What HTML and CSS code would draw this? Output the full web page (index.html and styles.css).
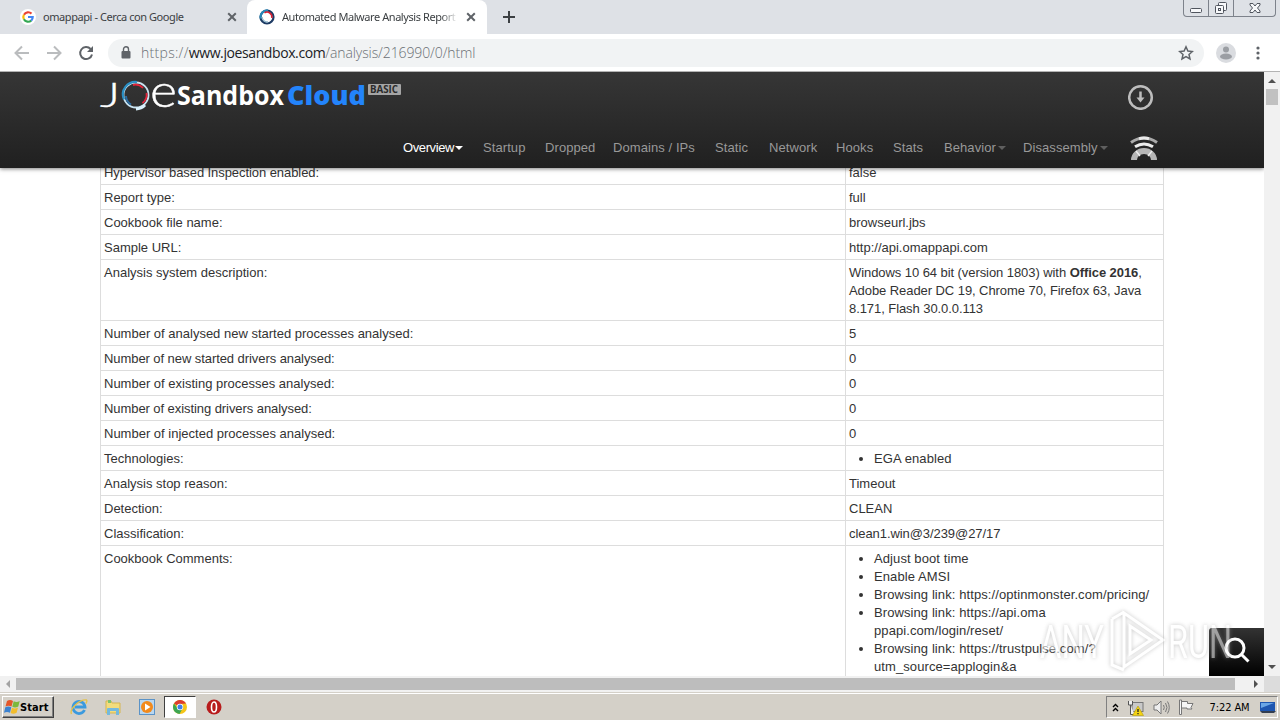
FILE: index.html
```html
<!DOCTYPE html>
<html lang="en">
<head>
    <meta charset="UTF-8">
    <meta name="viewport" content="width=device-width, initial-scale=1.0">
    <title>Automated Malware Analysis Report</title>
    <link rel="stylesheet" href="styles.css">
</head>
<body>
    <div class="tabstrip">
        <div class="tab">
            <svg class="favicon" width="16" height="16" viewBox="0 0 16 16">
                <circle cx="8" cy="8" r="8" fill="#fff"/>
                <g fill="none" stroke-width="2.2">
                    <path d="M4 5.7A4.8 4.8 0 0 1 11.5 4.6" stroke="#ea4335"/>
                    <path d="M3.9 10.3a4.8 4.8 0 0 1 0-4.6" stroke="#fbbc05"/>
                    <path d="M11.3 11.5A4.8 4.8 0 0 1 3.9 10.3" stroke="#34a853"/>
                    <path d="M8 8h4.7a4.8 4.8 0 0 1-1.5 3.6" stroke="#4285f4"/>
                </g>
            </svg>
            <span class="tab-title">omappapi - Cerca con Google</span>
            <svg class="close" width="10" height="10" viewBox="0 0 10 10"><path d="M1.2 1.2l7.6 7.6M8.8 1.2L1.2 8.8"/></svg>
        </div>
        <div class="tab active">
            <svg class="favicon" width="16" height="16" viewBox="0 0 16 16" fill="none">
                <circle cx="8" cy="8" r="6.5" stroke="#1d3b64" stroke-width="2.2"/>
                <path d="M1.8 9.5A6.5 6.5 0 0 1 9 1.5" stroke="#2787b8" stroke-width="2.2"/>
                <path d="M5.5 3.8A4.9 4.9 0 0 1 12.8 9" stroke="#d52234" stroke-width="1.6"/>
                <path d="M3.1 8a4.9 4.9 0 0 0 6 4.8" stroke="#94b9ce" stroke-width="1.3"/>
            </svg>
            <span class="tab-title fade">Automated Malware Analysis Report</span>
            <svg class="close" width="10" height="10" viewBox="0 0 10 10"><path d="M1.2 1.2l7.6 7.6M8.8 1.2L1.2 8.8"/></svg>
        </div>
        <svg class="new-tab" width="12" height="12" viewBox="0 0 12 12"><path d="M6 0v12M0 6h12"/></svg>
        <div class="window-buttons">
            <span><svg width="14" height="16" viewBox="0 0 14 16"><rect x="1.5" y="8.5" width="11" height="4" rx="1"/></svg></span>
            <span><svg width="14" height="16" viewBox="0 0 14 16"><rect x="4.5" y="2.5" width="8" height="8" rx="1"/><rect x="1.5" y="5.5" width="8" height="8" rx="1"/><rect x="4.5" y="8.5" width="2" height="2"/></svg></span>
            <span><svg width="14" height="16" viewBox="0 0 14 16"><path d="M2 3.5h3l2 2.500 2-2.500h3v1.500L9.500 8l2.500 3v1.500H9L7 10l-2 2.500H2V11l2.500-3L2 5z"/></svg></span>
        </div>
    </div>

    <div class="toolbar">
        <svg class="nav-icon off" width="16" height="16" viewBox="0 0 16 16"><path d="M15 8H2M8 1.5L1.5 8 8 14.5"/></svg>
        <svg class="nav-icon off" width="16" height="16" viewBox="0 0 16 16"><path d="M1 8h13M8 1.5L14.5 8 8 14.5"/></svg>
        <svg class="nav-icon" width="16" height="16" viewBox="0 0 16 16"><path d="M12.6 4A6 6 0 1 0 14 9.5"/><path class="solid" d="M15 1v6H9z"/></svg>
        <div class="omnibox">
            <svg width="10" height="13" viewBox="0 0 10 13"><rect x="0.5" y="5" width="9" height="7.5" rx="1" fill="#5f6368"/><path d="M2.5 5V3.3a2.5 2.5 0 0 1 5 0V5" fill="none" stroke="#5f6368" stroke-width="1.4"/></svg>
            <span class="url"><span class="scheme">https://</span><b>www.joesandbox.com</b>/analysis/216990/0/html</span>
            <svg class="star" width="16" height="16" viewBox="0 0 16 16"><path d="M8 1.8l1.9 4.2 4.500.5-3.400 3 1 4.500L8 11.700 4 14l1-4.500-3.400-3 4.500-.5z"/></svg>
        </div>
        <svg class="avatar" width="20" height="20" viewBox="0 0 20 20"><circle cx="10" cy="10" r="10" fill="#dadce0"/><circle cx="10" cy="6.5" r="3" fill="#9b9ea3"/><ellipse cx="10" cy="13.5" rx="6" ry="3" fill="#9b9ea3"/></svg>
        <svg class="dots" width="4" height="14" viewBox="0 0 4 14"><circle cx="2" cy="2" r="1.6"/><circle cx="2" cy="7" r="1.6"/><circle cx="2" cy="12" r="1.6"/></svg>
    </div>

    <div class="viewport">
        <div class="page">
            <div class="header">
                <div class="header-top">
                    <svg class="logo" width="304" height="36" viewBox="0 0 304 36">
                        <g class="joe">
                            <text x="0" y="31" textLength="20" lengthAdjust="spacingAndGlyphs">J</text>
                            <text class="e" x="50" y="31" textLength="27" lengthAdjust="spacingAndGlyphs">e</text>
                        </g>
                        <g fill="none">
                            <circle cx="36" cy="19" r="12.5" stroke="#c9e4f2" stroke-width="1.8"/>
                            <path d="M24 23.500A12.500 12.500 0 0 1 37 6" stroke="#2b8fc4" stroke-width="2.2"/>
                            <path d="M26 20a10 10 0 0 0 5 8.500" stroke="#2b6ba0" stroke-width="2"/>
                            <path d="M33 9A10.500 10.500 0 0 1 43 12M46.500 17a10.500 10.500 0 0 1-4 10" stroke="#e3243b" stroke-width="1.8"/>
                            <path d="M36 33a13 13 0 0 0 9-4" stroke="#d9f0fb" stroke-width="3"/>
                        </g>
                        <text class="sandbox" x="77" y="29" textLength="107" lengthAdjust="spacingAndGlyphs">Sandbox</text>
                        <text class="cloud" x="187" y="29" textLength="79" lengthAdjust="spacingAndGlyphs">Cloud</text>
                        <rect x="268" y="8" width="33" height="11" rx="1" fill="#a5a5a5"/>
                        <text class="basic" x="270" y="17" textLength="28" lengthAdjust="spacingAndGlyphs">BASIC</text>
                    </svg>
                    <svg class="download" width="26" height="26" viewBox="0 0 26 26"><circle cx="12.5" cy="13.5" r="11.3"/><path d="M12.500 7.500v8"/><path class="tip" d="M8.500 13.500h8l-4 5z"/></svg>
                </div>
                <div class="menu">
                    <span class="current">Overview<i></i></span>
                    <span>Startup</span>
                    <span>Dropped</span>
                    <span>Domains / IPs</span>
                    <span>Static</span>
                    <span>Network</span>
                    <span>Hooks</span>
                    <span>Stats</span>
                    <span>Behavior<i></i></span>
                    <span>Disassembly<i></i></span>
                    <svg width="28" height="26" viewBox="0 0 28 26" fill="none">
                        <path d="M1 7.500Q14-1.500 27 7.500" stroke="#aaa" stroke-width="3"/>
                        <path d="M9 3.700Q14 2.400 19 3.700" stroke="#e8e8e8" stroke-width="3"/>
                        <path d="M5 11.800Q14 6 23 11.800" stroke="#ececec" stroke-width="3"/>
                        <path d="M4 25a10 9 0 0 1 20 0" stroke="#b5b5b5" stroke-width="6"/>
                        <path d="M6 16l4 5M22 16l-4 5" stroke="#eee" stroke-width="1.4"/>
                    </svg>
                </div>
            </div>

            <table class="info">
                <tr><td class="tight">Hypervisor based Inspection enabled:</td><td>false</td></tr>
                <tr><td>Report type:</td><td>full</td></tr>
                <tr><td>Cookbook file name:</td><td>browseurl.jbs</td></tr>
                <tr><td>Sample URL:</td><td>http://api.omappapi.com</td></tr>
                <tr><td>Analysis system description:</td><td class="tight">Windows 10 64 bit (version 1803) with <b>Office 2016</b>,<br>Adobe Reader DC 19, Chrome 70, Firefox 63, Java<br>8.171, Flash 30.0.0.113</td></tr>
                <tr><td>Number of analysed new started processes analysed:</td><td>5</td></tr>
                <tr><td class="tight">Number of new started drivers analysed:</td><td>0</td></tr>
                <tr><td>Number of existing processes analysed:</td><td>0</td></tr>
                <tr><td class="tight">Number of existing drivers analysed:</td><td>0</td></tr>
                <tr><td>Number of injected processes analysed:</td><td>0</td></tr>
                <tr><td>Technologies:</td><td><ul><li>EGA enabled</li></ul></td></tr>
                <tr><td>Analysis stop reason:</td><td>Timeout</td></tr>
                <tr><td>Detection:</td><td>CLEAN</td></tr>
                <tr><td>Classification:</td><td class="tight">clean1.win@3/239@27/17</td></tr>
                <tr>
                    <td>Cookbook Comments:</td>
                    <td>
                        <ul>
                            <li>Adjust boot time</li>
                            <li>Enable AMSI</li>
                            <li>Browsing link: https://optinmonster.com/pricing/</li>
                            <li>Browsing link: https://api.oma<br>ppapi.com/login/reset/</li>
                            <li>Browsing link: https://trustpulse.com/?<br>utm_source=applogin&amp;a</li>
                        </ul>
                    </td>
                </tr>
            </table>

            <div class="search">
                <svg width="26" height="26" viewBox="0 0 26 26"><circle cx="11" cy="11" r="9"/><path d="M17.5 17.5l7 7"/></svg>
            </div>
            <svg class="watermark" width="200" height="70" viewBox="0 0 200 70">
                <text x="4" y="53" textLength="64" lengthAdjust="spacingAndGlyphs">ANY</text>
                <path d="M88 8l39 27-39 27zM76 14v46l12 5M76 14l12-7"/>
                <path d="M94 21l21 14-21 14z"/>
                <text x="132" y="53" textLength="64" lengthAdjust="spacingAndGlyphs">RUN</text>
            </svg>
        </div>
        <div class="vscroll">
            <span class="arrow up"></span>
            <span class="thumb"></span>
            <span class="arrow down"></span>
        </div>
    </div>
    <div class="hscroll">
        <span class="arrow left"></span>
        <span class="thumb"></span>
        <span class="arrow right"></span>
        <span class="corner"></span>
    </div>

    <div class="taskbar">
        <div class="start">
            <svg width="17" height="16" viewBox="0 0 17 16">
                <path d="M3 2q3-2 6 0L7.5 7.5q-3-1.500-6 0z" fill="#e4572a"/>
                <path d="M9.700 2.300q3 1.500 6-.3L14.300 7.500q-3 1.800-6 .3z" fill="#7cb83c"/>
                <path d="M1.300 8.300q3-1.500 6 0L6 13.800q-3-1.800-6 0z" fill="#3b82d0"/>
                <path d="M8 8.700q3 1.500 6-.3l-1.400 5.400q-3 1.800-6 .3z" fill="#f2bd2c"/>
            </svg>
            Start
        </div>
        <div class="apps">
            <span>
                <svg width="18" height="18" viewBox="0 0 18 18" fill="none"><path d="M14.500 12A6 6 0 1 1 15 9H5" stroke="#3b9ade" stroke-width="2.8"/><path d="M1.500 16C-1 11 10 1 16.500 2c1 1 0 2.500-.7 3.500" stroke="#e5c24b" stroke-width="1.4"/></svg>
            </span>
            <span>
                <svg width="18" height="18" viewBox="0 0 18 18"><path d="M2 3h5l1 2h8v10H2z" fill="#f2dc7c" stroke="#d5b550"/><path d="M4 2h3v3H4z" fill="#7cc36b"/><path d="M3 17v-6q0-1 1-1h10q1 0 1 1v6h-3v-4H6v4z" fill="#74b9dd"/></svg>
            </span>
            <span>
                <svg width="18" height="18" viewBox="0 0 18 18"><rect x="1.5" y="1.5" width="15" height="15" fill="#b9d7f0" stroke="#5b93c7"/><circle cx="9" cy="9" r="6" fill="#f28a1c"/><path d="M7 5.500l5.500 3.500L7 12.500z" fill="#fff"/></svg>
            </span>
            <span class="pressed">
                <svg width="14" height="14" viewBox="0 0 14 14"><circle cx="7" cy="7" r="7" fill="#f5c518"/><path d="M7 7L1 3.400A7 7 0 0 1 13 3.500L7 4z" fill="#dc3d30"/><path d="M1 3.400A7 7 0 0 0 6.500 14L9.500 8.500 5 9z" fill="#3da653"/><circle cx="7" cy="7" r="3.2" fill="#fff"/><circle cx="7" cy="7" r="2.5" fill="#3f80e8"/></svg>
            </span>
            <span>
                <svg width="16" height="16" viewBox="0 0 16 16"><circle cx="8" cy="8" r="7.5" fill="#b81c1c"/><ellipse cx="8" cy="8" rx="2.5" ry="5" fill="#b81c1c" stroke="#fff" stroke-width="1.6"/></svg>
            </span>
        </div>
        <div class="tray">
            <svg width="7" height="9" viewBox="0 0 7 9" fill="none" stroke="#000" stroke-width="1.4"><path d="M1 4l2.500-2.500L6 4M1 8l2.500-2.500L6 8"/></svg>
            <svg width="17" height="17" viewBox="0 0 17 17"><rect x="5" y="3.5" width="11" height="9" fill="#c9c9c9" stroke="#777"/><path d="M1.500 2v4h4V2M3.500 6v9.500h4" fill="#eee" stroke="#555"/><path d="M11 7l5.500 9.500h-11z" fill="#f4d312" stroke="#b49a0a" stroke-width=".6"/><path d="M11 10v3M11 14v1.200" stroke="#222" stroke-width="1.3"/></svg>
            <svg width="17" height="15" viewBox="0 0 17 15" fill="none" stroke="#777"><path d="M1 5h3l4-4v13l-4-4H1z" fill="#eee"/><path d="M10.500 5q1.500 2.500 0 5M12.500 3q3 4.500 0 9M14.500 1.500q3.500 6 0 12"/></svg>
            <svg width="17" height="16" viewBox="0 0 17 16"><path d="M1.500 1v14.500h2V1zM3.500 2.500h6v2H15l-2 4 1 1.500H9V9H3.500z" fill="#f5f5f5" stroke="#777"/></svg>
            <span class="clock">7:22 AM</span>
            <svg width="16" height="13" viewBox="0 0 16 13"><path d="M0 1h15v9H0z" fill="#1e56b0"/><path d="M1 2h13L1 7z" fill="#6aa6e6"/><path d="M0 10h16l-2 2H2z" fill="#333e50"/></svg>
        </div>
    </div>
</body>
</html>
```
FILE: styles.css
```css
body {
    margin: 0;
    width: 1280px;
    height: 720px;
    overflow: hidden;
    display: flex;
    flex-direction: column;
    background: #fff;
    font-family: "Liberation Sans", Arial, sans-serif;
    font-size: 13px;
    color: #333;
}

svg {
    display: block;
    flex: none;
}

/* browser chrome */
.tabstrip {
    height: 34px;
    flex: none;
    background: #dee1e6;
    display: flex;
    align-items: center;
}

.tab {
    box-sizing: border-box;
    width: 247px;
    height: 34px;
    padding: 0 10px 0 20px;
    display: flex;
    align-items: center;
    font-family: "Noto Sans", sans-serif;
    font-size: 11px;
    color: #3c4043;
}

.tab.active {
    width: 240px;
    padding: 0 11px 0 12px;
    background: #fff;
    border-radius: 8px 8px 0 0;
}

.tab-title {
    flex: 1;
    margin-left: 7px;
    margin-right: 8px;
    margin-top: -2px;
    white-space: nowrap;
    overflow: hidden;
    letter-spacing: -0.43px;
}

.fade {
    -webkit-mask-image: linear-gradient(90deg, #000 90%, transparent);
    mask-image: linear-gradient(90deg, #000 90%, transparent);
}

.close, .new-tab {
    fill: none;
    stroke: #5f6368;
    stroke-width: 2;
}

.new-tab {
    margin-left: 16px;
    stroke: #3c4043;
}

.window-buttons {
    box-sizing: border-box;
    align-self: flex-start;
    margin-left: auto;
    margin-right: 4px;
    width: 93px;
    height: 17px;
    border: 1px solid #7d828b;
    border-top: 0;
    border-radius: 0 0 4px 4px;
    display: grid;
    grid-template-columns: 24px 25px 1fr;
}

.window-buttons span {
    display: flex;
    justify-content: center;
}

.window-buttons span + span {
    border-left: 1px solid #7d828b;
}

.window-buttons svg {
    fill: #f7f8fa;
    stroke: #50555e;
}

.toolbar {
    box-sizing: border-box;
    height: 38px;
    flex: none;
    padding: 0 20px 0 14px;
    border-bottom: 1px solid #b3b3b3;
    display: flex;
    align-items: center;
}

.nav-icon {
    margin-right: 16px;
    fill: none;
    stroke: #5f6368;
    stroke-width: 2;
}

.nav-icon .solid {
    fill: #5f6368;
    stroke: none;
}

.nav-icon.off {
    stroke: #babcbe;
}

.omnibox {
    box-sizing: border-box;
    width: 1096px;
    height: 28px;
    margin-left: -2px;
    padding: 0 10px 0 13px;
    border-radius: 14px;
    background: #f1f3f4;
    display: flex;
    align-items: center;
}

.url {
    margin-left: 10px;
    margin-top: -1px;
    font-family: "Open Sans", "Noto Sans", sans-serif;
    font-size: 14px;
    font-weight: 300;
    letter-spacing: -0.1px;
    color: #6b7075;
}

.scheme {
    letter-spacing: 0.3px;
}

.url b {
    font-weight: 400;
    letter-spacing: -0.4px;
    color: #202124;
}

.star {
    margin-left: auto;
    fill: none;
    stroke: #5f6368;
    stroke-width: 1.5;
}

.avatar {
    margin-left: 12px;
}

.dots {
    margin-left: auto;
    fill: #5f6368;
}

/* report page */
.viewport {
    height: 604px;
    flex: none;
    display: flex;
}

.page {
    position: relative;
    width: 1264px;
    overflow: hidden;
}

.header {
    box-sizing: border-box;
    position: relative;
    z-index: 1;
    height: 96px;
    padding: 4px 106px 0 100px;
    background: linear-gradient(#363636, #202020);
    box-shadow: 0 1px 4px rgba(0, 0, 0, 0.5);
}

.header-top {
    display: flex;
    justify-content: space-between;
    margin-right: 4px;
}

.logo {
    overflow: visible;
}

.joe {
    font-family: Lato, sans-serif;
    font-weight: 300;
    font-size: 34px;
    fill: #fff;
    stroke: #fff;
    stroke-width: 0.4;
}

.joe .e {
    font-size: 46px;
}

.sandbox, .cloud {
    font-family: "Open Sans", sans-serif;
    font-weight: 700;
    font-size: 27px;
    fill: #fff;
}

.cloud {
    font-weight: 800;
    fill: #2384fb;
}

.basic {
    font-family: "Open Sans", sans-serif;
    font-weight: 700;
    font-size: 10px;
    fill: #2b2b2b;
}

.download {
    margin-top: 8px;
    fill: none;
    stroke: #bdbdbd;
    stroke-width: 2.5;
}

.download .tip {
    fill: #bdbdbd;
    stroke: none;
}

.menu {
    display: grid;
    grid-template-columns: 80px 62px 68px 102px 54px 67px 57px 51px 79px 107px 28px;
    justify-content: end;
    align-items: center;
    height: 26px;
    margin-top: 21px;
    color: #999;
    letter-spacing: 0.08px;
    white-space: nowrap;
}

.menu .current {
    color: #fff;
    letter-spacing: -0.4px;
}

.menu svg {
    margin-top: 2px;
}

.menu i {
    display: inline-block;
    margin-left: 1px;
    vertical-align: 2px;
    border: 4px solid transparent;
    border-top-color: currentColor;
    border-bottom: 0;
}

.menu span:not(.current) i {
    margin-left: 2px;
    opacity: 0.5;
}

.info {
    width: 1064px;
    margin: -9px 0 0 100px;
    table-layout: fixed;
    border-collapse: collapse;
    line-height: 18px;
}

.info td {
    padding: 4px 3px 2px;
    border: 1px solid #ddd;
    vertical-align: top;
    white-space: nowrap;
}

.info td:first-child {
    width: 738px;
}

.info .tight {
    letter-spacing: -0.07px;
}

.info ul {
    margin: 0;
    padding-left: 25px;
    letter-spacing: 0.09px;
}

.search {
    position: absolute;
    right: 0;
    bottom: 0;
    width: 55px;
    height: 48px;
    border-radius: 3px 0 0 0;
    background: linear-gradient(#333, #000);
    display: flex;
    align-items: center;
    justify-content: center;
}

.search svg {
    margin-top: -4px;
    fill: none;
    stroke: #fff;
    stroke-width: 3;
}

.watermark {
    position: absolute;
    left: 1036px;
    top: 533px;
    opacity: 0.55;
    filter: drop-shadow(0 0 2px #999);
    fill: none;
    stroke: #fff;
    stroke-width: 3;
}

.watermark text {
    fill: #fff;
    stroke: none;
    font-family: Roboto, sans-serif;
    font-size: 46px;
}

/* scrollbars */
.vscroll {
    width: 16px;
    background: #f1f1f1;
    display: flex;
    flex-direction: column;
    align-items: center;
}

.vscroll .thumb {
    width: 12px;
    height: 16px;
    margin-top: 6px;
    background: #c1c1c1;
}

.arrow {
    border: 4px solid transparent;
}

.arrow.up {
    margin-top: 7px;
    border-top: 0;
    border-bottom-color: #505050;
}

.arrow.down {
    margin-top: auto;
    margin-bottom: 7px;
    border-bottom: 0;
    border-top-color: #505050;
}

.hscroll {
    height: 16px;
    flex: none;
    background: #f1f1f1;
    display: flex;
    align-items: center;
}

.hscroll .thumb {
    width: 1219px;
    height: 12px;
    margin-left: 6px;
    background: #bdbdbd;
}

.arrow.left {
    margin-left: 6px;
    border-left: 0;
    border-right-color: #a3a3a3;
}

.arrow.right {
    margin-left: 19px;
    border-right: 0;
    border-left-color: #505050;
}

.corner {
    width: 16px;
    height: 16px;
    margin-left: auto;
    background: #dcdcdc;
}

/* taskbar */
.taskbar {
    box-sizing: border-box;
    height: 28px;
    padding: 2px 2px 1px;
    border-top: 1px solid #d4d0c8;
    background: #d4d0c8;
    box-shadow: inset 0 1px #fff;
    display: flex;
    align-items: center;
    color: #000;
}

.start {
    box-sizing: border-box;
    width: 52px;
    height: 22px;
    padding-left: 1px;
    border: 1px solid;
    border-color: #fff #404040 #404040 #fff;
    box-shadow: inset -1px -1px #808080;
    display: flex;
    align-items: center;
    font-family: "DejaVu Sans Condensed", "DejaVu Sans", sans-serif;
    font-weight: bold;
    font-size: 11px;
    letter-spacing: 0.1px;
}

.start svg {
    margin-right: -1px;
}

.apps {
    display: flex;
    margin-left: 9px;
}

.apps span {
    box-sizing: border-box;
    width: 32px;
    height: 22px;
    margin-right: 1.8px;
    display: flex;
    align-items: center;
    justify-content: center;
}

.apps .pressed {
    background: #fff;
    border: 1px solid;
    border-color: #404040 #fff #fff #404040;
}

.tray {
    box-sizing: border-box;
    width: 172px;
    height: 22px;
    margin-left: auto;
    padding: 0 1px 0 5px;
    border: 1px solid;
    border-color: #808080 #fff #fff #808080;
    display: flex;
    align-items: center;
    justify-content: space-between;
}

.clock {
    margin-left: 6px;
    margin-right: 2px;
    font-family: "DejaVu Sans Condensed", "DejaVu Sans", sans-serif;
    font-size: 11px;
    letter-spacing: -0.1px;
}
```
